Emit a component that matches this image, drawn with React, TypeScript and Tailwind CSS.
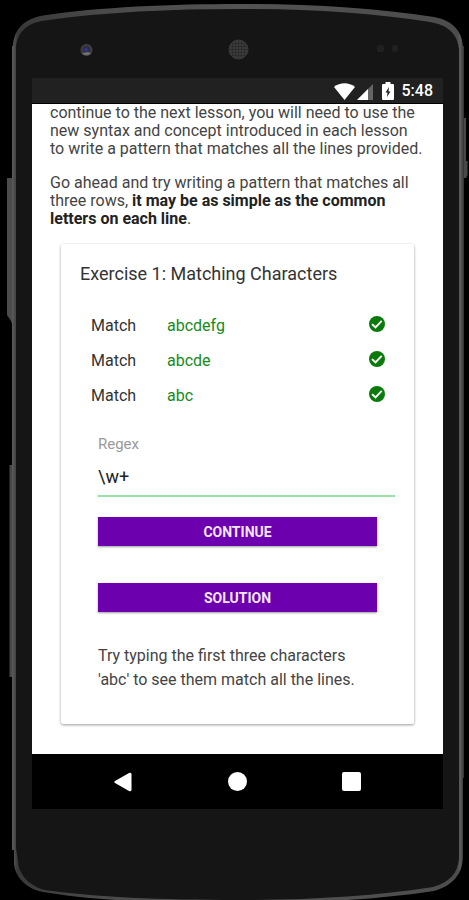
import { useState } from "react";

function PhoneBody() {
  return (
    <svg
      className="absolute inset-0 h-full w-full"
      viewBox="0 0 469 900"
      preserveAspectRatio="none"
      aria-hidden="true"
    >
      <defs>
        <linearGradient id="rim" x1="0" y1="0" x2="1" y2="0">
          <stop offset="0" stopColor="#5c5c5c" />
          <stop offset="0.012" stopColor="#383838" />
          <stop offset="0.2" stopColor="#4a4a4a" />
          <stop offset="0.5" stopColor="#525252" />
          <stop offset="0.985" stopColor="#4c4c4c" />
          <stop offset="0.992" stopColor="#5c5c5c" />
          <stop offset="1" stopColor="#303030" />
        </linearGradient>
        <radialGradient id="lens">
          <stop offset="0" stopColor="#30306c" />
          <stop offset="0.4" stopColor="#2c2c3c" />
          <stop offset="1" stopColor="#444448" />
        </radialGradient>
        <pattern id="mesh" width="3" height="3" patternUnits="userSpaceOnUse">
          <rect width="3" height="3" fill="#3a3a3a" />
          <circle cx="1.5" cy="1.5" r="1" fill="#242424" />
        </pattern>
      </defs>
      <path d="M7 178H13V327L11 321L7 315Z" fill="#4c4c4c" />
      <path d="M9.500 465H13V677H9.500Z" fill="#484848" />
      <path d="M462 118H466V161H467.500V175L466 178H462Z" fill="#484848" />
      <path
        d="M12 46H13C14 29 24 19 43 15.500C100 7 170 4 240 4C310 4 375 8 434 17C452 20 462 31 463 46H464V778H463V858C462 875 452 886 434 891C375 900 310 903 240 903C160 903 95 901 43 892C27 889 14 877 14 862V850H12Z"
        fill="url(#rim)"
      />
      <path
        d="M16 48C17 32 27 23 45 20.500C105 12 170 9 240 9C310 9 372 13 430 22C448 25 458 34 459 50V858C458 873 450 882 433 887C375 896 310 900 240 900C160 900 95 897 45 890C29 886 18 874 18 860L16 848Z"
        fill="#151515"
      />
      <circle cx="86.500" cy="50" r="6" fill="url(#lens)" />
      <path d="M82 53A5.500 5.500 0 0 0 91 53L88 52Z" fill="#707070" />
      <circle cx="86" cy="49.500" r="1.500" fill="#3434b4" />
      <circle cx="238.500" cy="49.500" r="9.500" fill="url(#mesh)" stroke="#3c3c3c" />
      <rect x="377" y="45" width="7" height="7" rx="2" fill="#202020" />
      <rect x="392" y="45" width="6" height="7" rx="2" fill="#202020" />
    </svg>
  );
}

function StatusBar() {
  return (
    <header className="flex h-[26px] items-center justify-end border-b border-black bg-[#212121] pr-[10px] text-white">
      <svg width="40" height="20" viewBox="0 0 40 20" className="mr-2 block" aria-hidden="true">
        <path d="M0 6C6 1 15 1 21 6L10.500 19Z" fill="#fff" />
        <path d="M39 3V19H23Z" fill="#656565" />
        <path d="M34 8V19H23Z" fill="#fff" />
      </svg>
      <svg width="12" height="20" viewBox="0 0 12 20" className="mr-2 block" aria-hidden="true">
        <path d="M3.500 1H8.500V3H11Q12 3 12 4V18Q12 19 11 19H1Q0 19 0 18V4Q0 3 1 3H3.500Z" fill="#fff" />
        <path d="M7 6L3.500 11.500H5.500L5 16L8.500 10.500H6.500Z" fill="#212121" />
      </svg>
      <span className="text-base leading-5 font-medium">5:48</span>
    </header>
  );
}

function CheckIcon() {
  return (
    <svg width="16" height="16" viewBox="0 0 16 16" className="mb-[3px]" role="img" aria-label="Matched">
      <circle cx="8" cy="8" r="8" fill="#087b0b" />
      <path d="M3 8.100L6.500 11.300L12.700 4.800" fill="none" stroke="#fff" strokeWidth="1.900" />
    </svg>
  );
}

const buttonClass =
  "block h-[29px] w-full bg-[#6c00ae] text-center text-sm font-bold text-[#f3e6fb] shadow-[0_1px_2px_rgba(0,0,0,0.4)]";

function ExerciseCard() {
  const [regex, setRegex] = useState("\\w+");
  return (
    <section className="mx-[11px] mt-4 rounded-xs bg-white px-[19px] pt-4 pb-8 shadow-[0_1px_3px_rgba(0,0,0,0.4)]">
      <h2 className="text-lg leading-7 text-[#333]">Exercise 1: Matching Characters</h2>
      <ul className="mt-5 pr-[10px] pl-[11px]">
        {["abcdefg", "abcde", "abc"].map((word) => (
          <li key={word} className="flex h-[35px] items-center text-base text-[#333]">
            <span className="w-[76px]">Match</span>
            <span className="flex-1 text-[#168a1c]">{word}</span>
            <CheckIcon />
          </li>
        ))}
      </ul>
      <div className="pt-[21px] pl-[18px]">
        <label htmlFor="regex" className="block text-[15px] leading-5 text-[#999]">
          Regex
        </label>
        <input
          id="regex"
          value={regex}
          onChange={(e) => setRegex(e.target.value)}
          className="block h-[43px] w-full border-b-2 border-[#96e2a6] bg-transparent pt-1 text-lg text-[#222] outline-none"
        />
      </div>
      <div className="px-[18px] pt-5">
        <div className="flex flex-col gap-[37px]">
          <button type="button" className={buttonClass}>CONTINUE</button>
          <button type="button" className={buttonClass}>SOLUTION</button>
        </div>
        <p className="mt-8 text-base leading-6 text-[#444]">
          Try typing the first three characters
          <br />
          'abc' to see them match all the lines.
        </p>
      </div>
    </section>
  );
}

function NavBar() {
  return (
    <nav className="flex h-[55px] items-center justify-between bg-black px-[82px]">
      <button type="button" aria-label="Back">
        <svg width="18" height="20" viewBox="0 0 18 20" className="block">
          <path d="M1 9L15 1Q17 0 17.500 2V18Q17 20 15 19L1 11Q-.5 10 1 9Z" fill="#fff" />
        </svg>
      </button>
      <button type="button" aria-label="Home">
        <span className="block size-[19px] rounded-full bg-white" />
      </button>
      <button type="button" aria-label="Recent apps">
        <span className="block size-[19px] rounded-xs bg-white" />
      </button>
    </nav>
  );
}

export default function App() {
  return (
    <div className="relative min-h-screen overflow-hidden bg-black font-[Roboto,sans-serif]">
      <PhoneBody />
      <div className="relative pt-[78px] pr-[26px] pb-[91px] pl-8">
        <StatusBar />
        <main className="overflow-hidden bg-white px-[18px] pb-[30px]">
          <div className="text-base leading-[18px] text-[#444]">
            <p>
              continue to the next lesson, you will need to use the
              <br />
              new syntax and concept introduced in each lesson
              <br />
              to write a pattern that matches all the lines provided.
            </p>
            <p className="mt-4">
              Go ahead and try writing a pattern that matches all
              <br />
              three rows, <b className="font-bold text-[#222]">it may be as simple as the common</b>
              <br />
              <b className="font-bold text-[#222]">letters on each line</b>.
            </p>
          </div>
          <ExerciseCard />
        </main>
        <NavBar />
      </div>
    </div>
  );
}
